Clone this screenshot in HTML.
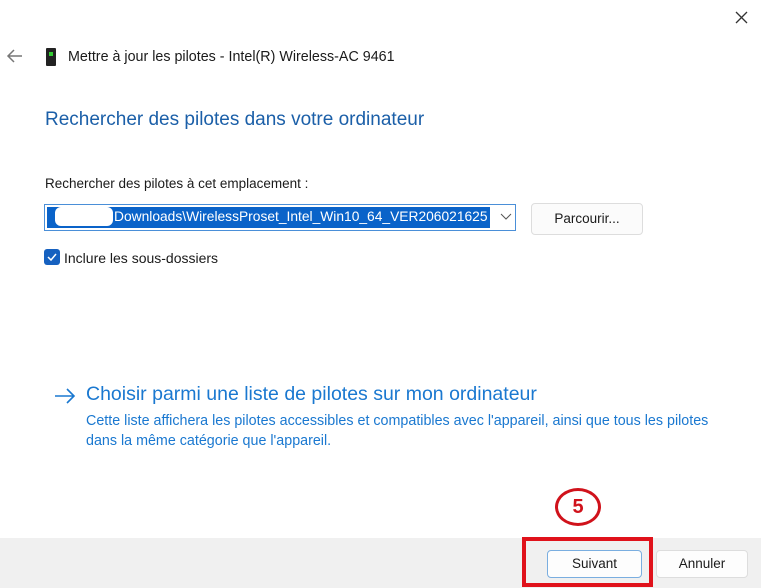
<!DOCTYPE html>
<html><head><meta charset="utf-8"><style>
body{margin:0;width:761px;height:588px;background:#fff;position:relative;overflow:hidden;font-family:"Liberation Sans",sans-serif;color:#1a1a1a}
.a{position:absolute;white-space:nowrap}
</style></head><body>
<svg class="a" style="left:735px;top:11px" width="13" height="13"><path d="M1 1l11 11M12 1L1 12" stroke="#333" stroke-width="1.3"/></svg>
<svg class="a" style="left:6px;top:48px" width="18" height="16"><path d="M16 8H2M8 2L2 8l6 6" stroke="#777" stroke-width="1.5" fill="none"/></svg>
<div class="a" style="left:46px;top:48px;width:10px;height:18px;background:#222;border-radius:1px"></div>
<div class="a" style="left:49px;top:52px;width:4px;height:4px;background:#3c3"></div>
<div class="a" style="left:68px;top:49px;font-size:14.3px">Mettre à jour les pilotes - Intel(R) Wireless-AC 9461</div>
<div class="a" style="left:45px;top:109px;font-size:19px;color:#1b5fa8">Rechercher des pilotes dans votre ordinateur</div>
<div class="a" style="left:45px;top:176px;font-size:13.5px">Rechercher des pilotes à cet emplacement :</div>
<div class="a" style="left:44px;top:204px;width:472px;height:27px;border:1px solid #4a8fd8;box-sizing:border-box"></div>
<div class="a" style="left:47px;top:207px;width:443px;height:21px;background:#0a63c9"></div>
<div class="a" style="left:55px;top:207px;width:58px;height:19px;background:#fff;border-radius:6px"></div>
<div class="a" style="left:114px;top:209px;font-size:13.8px;color:#fff">Downloads\WirelessProset_Intel_Win10_64_VER206021625</div>
<svg class="a" style="left:500px;top:213px" width="12" height="8"><path d="M1 1l5 5 5-5" stroke="#555" fill="none"/></svg>
<div class="a" style="left:531px;top:203px;width:112px;height:32px;border:1px solid #ddd;border-radius:4px;background:#fbfbfb;box-sizing:border-box;text-align:center;line-height:40px;font-size:13.5px;line-height:30px">Parcourir...</div>
<div class="a" style="left:44px;top:249px;width:16px;height:16px;background:#1661c0;border-radius:3px"></div>
<svg class="a" style="left:44px;top:249px" width="16" height="16"><path d="M4 8l3 3 5-6" stroke="#fff" stroke-width="1.5" fill="none"/></svg>
<div class="a" style="left:64px;top:250px;font-size:14px">Inclure les sous-dossiers</div>
<svg class="a" style="left:54px;top:388px" width="22" height="16"><path d="M1 8h19M13 1l7 7-7 7" stroke="#1a78d0" stroke-width="1.6" fill="none"/></svg>
<div class="a" style="left:86px;top:383px;font-size:19.5px;color:#1a78d0">Choisir parmi une liste de pilotes sur mon ordinateur</div>
<div class="a" style="left:86px;top:411px;font-size:14.3px;color:#1a78d0;line-height:20px">Cette liste affichera les pilotes accessibles et compatibles avec l'appareil, ainsi que tous les pilotes<br>dans la même catégorie que l'appareil.</div>
<div class="a" style="left:0;top:538px;width:761px;height:50px;background:#f0f0f0"></div>
<div class="a" style="left:547px;top:550px;width:95px;height:28px;border:1px solid #7aaee0;border-radius:4px;background:#fdfdfd;box-sizing:border-box;text-align:center;line-height:26px;font-size:13.5px">Suivant</div>
<div class="a" style="left:656px;top:550px;width:92px;height:28px;border:1px solid #ddd;border-radius:4px;background:#fdfdfd;box-sizing:border-box;text-align:center;line-height:26px;font-size:13.5px">Annuler</div>
<div class="a" style="left:522px;top:537px;width:131px;height:50px;border:4px solid #e0121b;box-sizing:border-box"></div>
<div class="a" style="left:555px;top:488px;width:46px;height:38px;border:3px solid #d0121b;border-radius:50%;box-sizing:border-box;text-align:center;line-height:32px;font-size:20px;font-weight:bold;color:#d0121b">5</div>
</body></html>
